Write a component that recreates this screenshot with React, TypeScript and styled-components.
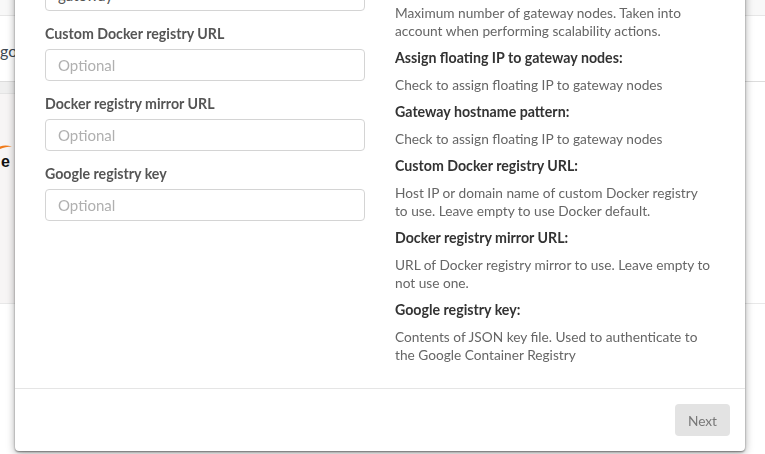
import React from "react";
import styled, { createGlobalStyle } from "styled-components";

const GlobalStyle = createGlobalStyle`
  html, body {
    margin: 0;
    padding: 0;
    background: #fff;
  }
  body {
    font-family: Lato, "Open Sans", "Liberation Sans", sans-serif;
    font-size: 13.7px;
    color: #555;
  }
  * { box-sizing: border-box; }
`;

const Page = styled.div`
  position: relative;
  height: 454px;
  overflow: hidden;
  background: #fff;
`;

const TopStrip = styled.div`
  height: 16px;
  background: #f8f8f8;
  border-bottom: 1px solid #e6e6e6;
`;

const Header = styled.header`
  height: 66px;
  display: flex;
  align-items: center;
  padding-top: 4px;
  border-bottom: 1px solid #dcdcdc;
  font-size: 16px;
  color: #3d4852;
  white-space: nowrap;
`;

const ContentRow = styled.div`
  display: flex;
  border-bottom: 1px solid #e8e8e8;
`;

const Tile = styled.div`
  width: 330px;
  display: flex;
  flex-direction: column;
`;

const TileBar = styled.div`
  height: 12px;
  background: #efefef;
  border-bottom: 1px solid #e4e4e4;
`;

const TileBody = styled.div`
  height: 209px;
  background: #f7f5f5;
  display: flex;
  align-items: center;
  padding-bottom: 84px;
`;

const LogoBox = styled.div`
  width: 12px;
  display: flex;
  flex-direction: column;
  align-items: flex-end;
  gap: 3px;
`;

const LogoWord = styled.span`
  font-family: "Liberation Sans", sans-serif;
  font-weight: 700;
  font-size: 16px;
  letter-spacing: 2px;
  color: #111;
  line-height: 16px;
  white-space: nowrap;
`;

const Overlay = styled.div`
  position: fixed;
  inset: 0;
  display: flex;
  flex-direction: column;
  justify-content: flex-end;
  align-items: flex-start;
  padding: 0 0 3px 15px;
  overflow: hidden;
`;

const Modal = styled.div`
  flex-shrink: 0;
  width: 730px;
  background: #fff;
  border-radius: 4px;
  box-shadow: 0 1px 2px rgba(0, 0, 0, 0.45), 0 2px 9px rgba(0, 0, 0, 0.35);
`;

const ModalTitle = styled.h3`
  margin: 0;
  padding: 18px 30px;
  font-size: 18px;
  font-weight: 400;
  color: #333;
  border-bottom: 1px solid #e5e5e5;
`;

const Body = styled.div`
  display: grid;
  grid-template-columns: 320px 320px;
  column-gap: 30px;
  align-items: start;
  padding: 24px 30px 15px;
`;

const FormColumn = styled.div`
  display: flex;
  flex-direction: column;
  padding-top: 1px;
`;

const Field = styled.div`
  display: flex;
  flex-direction: column;
  margin-bottom: 13px;
`;

const Label = styled.label`
  font-weight: 700;
  font-size: 14.2px;
  line-height: 20px;
  color: #555;
  margin-bottom: 5px;
`;

const Input = styled.input`
  width: 320px;
  height: 32px;
  padding: 6px 12px;
  border: 1px solid #d4d4d4;
  border-radius: 4px;
  font-family: inherit;
  font-size: 15px;
  color: #555;
  background: #fff;
  &::placeholder {
    color: #b0b0b0;
  }
`;

const HelpColumn = styled.dl`
  margin: 0;
  padding-top: 2px;
`;

const Term = styled.dt`
  font-weight: 700;
  font-size: 14.2px;
  line-height: 18px;
  color: #333;
  margin-bottom: 9px;
`;

const Desc = styled.dd`
  margin: 0 0 9px;
  font-size: 13.7px;
  line-height: 18px;
  color: #666;
`;

const DescLine = styled.span`
  display: block;
  white-space: nowrap;
`;

const Footer = styled.div`
  display: flex;
  justify-content: flex-end;
  padding: 15px;
  border-top: 1px solid #e5e5e5;
`;

const NextButton = styled.button`
  height: 32px;
  padding: 0 13px;
  border: none;
  border-radius: 4px;
  background: #e3e3e3;
  color: #777;
  font-family: inherit;
  font-size: 13.7px;
  cursor: not-allowed;
`;

const fields = [
  { label: "Cluster name", value: "production", placeholder: "" },
  { label: "Number of gateway nodes", value: "1", placeholder: "" },
  { label: "Gateway hostname pattern", value: "gateway", placeholder: "" },
  { label: "Custom Docker registry URL", value: "", placeholder: "Optional" },
  { label: "Docker registry mirror URL", value: "", placeholder: "Optional" },
  { label: "Google registry key", value: "", placeholder: "Optional" },
];

// help text is kept in the same lines as the design
const help = [
  { term: "Cluster name:", desc: ["Unique name of the cluster."] },
  { term: "Number of gateway nodes:", desc: ["Initial number of gateway nodes."] },
  { term: "Minimum gateway nodes:", desc: ["Minimum number of gateway nodes."] },
  {
    term: "Maximum gateway nodes:",
    desc: ["Maximum number of gateway nodes. Taken into", "account when performing scalability actions."],
  },
  { term: "Assign floating IP to gateway nodes:", desc: ["Check to assign floating IP to gateway nodes"] },
  { term: "Gateway hostname pattern:", desc: ["Check to assign floating IP to gateway nodes"] },
  {
    term: "Custom Docker registry URL:",
    desc: ["Host IP or domain name of custom Docker registry", "to use. Leave empty to use Docker default."],
  },
  {
    term: "Docker registry mirror URL:",
    desc: ["URL of Docker registry mirror to use. Leave empty to", "not use one."],
  },
  {
    term: "Google registry key:",
    desc: ["Contents of JSON key file. Used to authenticate to", "the Google Container Registry"],
  },
];

const SwooshLogo = () => (
  <svg width="15" height="8" viewBox="0 0 15 8">
    <path d="M0 5 C5 2 9 2 15 3.5 C9 4 5 5 0 7 Z" fill="#f07a1a" />
  </svg>
);

export default function App() {
  return (
    <Page>
      <GlobalStyle />
      <TopStrip />
      <Header>go to clusters</Header>
      <ContentRow>
        <Tile>
          <TileBar />
          <TileBody>
            <LogoBox>
              <SwooshLogo />
              <LogoWord>Orange</LogoWord>
            </LogoBox>
          </TileBody>
        </Tile>
      </ContentRow>

      <Overlay>
        <Modal>
          <ModalTitle>Create cluster</ModalTitle>
          <Body>
            <FormColumn>
              {fields.map((f) => (
                <Field key={f.label}>
                  <Label>{f.label}</Label>
                  <Input defaultValue={f.value} placeholder={f.placeholder} />
                </Field>
              ))}
            </FormColumn>
            <HelpColumn>
              {help.map((h) => (
                <React.Fragment key={h.term}>
                  <Term>{h.term}</Term>
                  <Desc>
                    {h.desc.map((line) => (
                      <DescLine key={line}>{line}</DescLine>
                    ))}
                  </Desc>
                </React.Fragment>
              ))}
            </HelpColumn>
          </Body>
          <Footer>
            <NextButton disabled>Next</NextButton>
          </Footer>
        </Modal>
      </Overlay>
    </Page>
  );
}
